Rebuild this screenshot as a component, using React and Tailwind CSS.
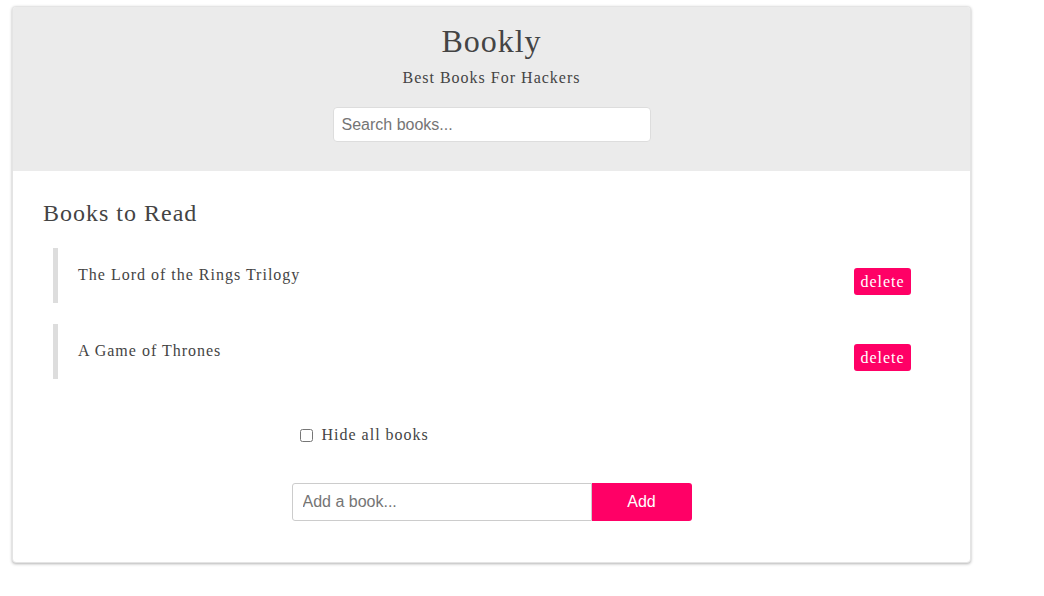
import React, { useState } from 'react';

const books = ['The Lord of the Rings Trilogy', 'A Game of Thrones'];

function App() {
  const [hidden, setHidden] = useState(false);

  return (
    <div className="min-h-[596px] bg-white pt-[6px] pl-[12px] font-['Liberation_Serif',serif] text-[#444]">
      <div className="w-[959px] overflow-hidden rounded-[4px] bg-white shadow-[0_1px_3px_rgba(0,0,0,0.3)] border border-[#e4e4e4]">
        <header className="flex flex-col items-center bg-[#ebebeb] pt-[16px] pb-[29px]">
          <h1 className="text-[32px] leading-[36px] tracking-[1px]">Bookly</h1>
          <p className="mt-[7px] text-[16px] leading-[24px] tracking-[1px]">Best Books For Hackers</p>
          <input
            type="text"
            placeholder="Search books..."
            className="mt-[17px] h-[35px] w-[318px] rounded-[4px] border border-[#ddd] bg-white px-[8px] font-['Liberation_Sans',sans-serif] text-[16px] text-[#444] placeholder:text-[#757575] outline-none"
          />
        </header>

        <div className="px-[30px] pt-[27px] pb-[41px]">
          <h2 className="text-[24px] leading-[30px] tracking-[1px]">Books to Read</h2>
          <ul className="mt-[20px] ml-[10px] flex flex-col gap-[21px]">
            {!hidden &&
              books.map(book => (
                <li
                  key={book}
                  className="flex h-[55px] items-start justify-between border-l-[5px] border-[#ddd] pl-[20px] pr-[29px]"
                >
                  <span className="mt-[15px] text-[16px] leading-[24px] tracking-[1px]">{book}</span>
                  <button className="mt-[20px] h-[27px] w-[57px] rounded-[3px] bg-[#ff0066] text-[16px] leading-[27px] tracking-[1px] text-white">
                    delete
                  </button>
                </li>
              ))}
          </ul>

          <div className="mx-auto mt-[44px] flex w-[400px] items-center pl-[8px]">
            <input
              type="checkbox"
              checked={hidden}
              onChange={e => setHidden(e.target.checked)}
              className="h-[13px] w-[13px]"
            />
            <label className="ml-[9px] text-[16px] leading-[24px] tracking-[1px]">Hide all books</label>
          </div>

          <form className="mx-auto mt-[36px] flex w-[400px]" onSubmit={e => e.preventDefault()}>
            <input
              type="text"
              placeholder="Add a book..."
              className="h-[38px] w-[300px] rounded-l-[3px] border border-[#ccc] px-[10px] font-['Liberation_Sans',sans-serif] text-[16px] text-[#444] placeholder:text-[#757575] outline-none"
            />
            <button
              type="submit"
              className="h-[38px] w-[100px] rounded-r-[3px] bg-[#ff0066] font-['Liberation_Sans',sans-serif] text-[16px] text-white"
            >
              Add
            </button>
          </form>
        </div>
      </div>
    </div>
  );
}

export default App;
